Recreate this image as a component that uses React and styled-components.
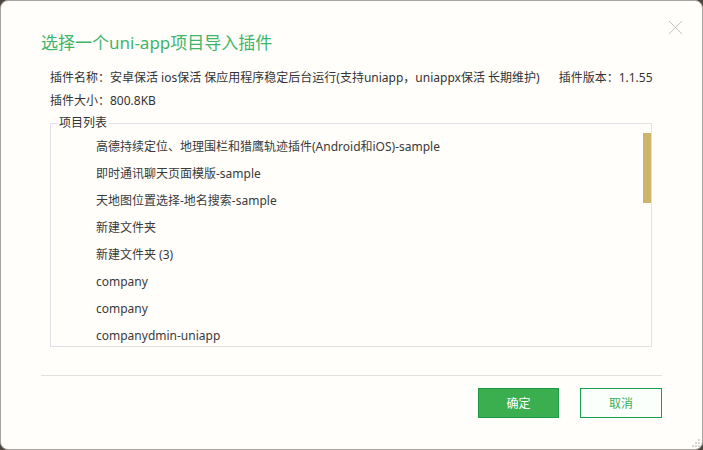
import React from 'react';
import styled, { createGlobalStyle } from 'styled-components';

const GlobalStyle = createGlobalStyle`
  html, body {
    margin: 0;
    padding: 0;
    background: #4d463e;
  }
  * {
    box-sizing: border-box;
  }
`;

const Window = styled.div`
  position: relative;
  width: 703px;
  height: 450px;
  display: flex;
  flex-direction: column;
  padding: 30px 40px 0 40px;
  background: #fffefb;
  border: 1px solid #a8a5a0;
  border-radius: 8px;
  font-family: "Noto Sans", "Noto Sans CJK SC", sans-serif;
  color: #333;
  overflow: hidden;
`;

const Title = styled.h1`
  margin: 0;
  font-size: 17px;
  line-height: 24px;
  font-weight: normal;
  color: #3fb56a;
`;

const CloseButton = styled.button`
  position: absolute;
  top: 18px;
  right: 19px;
  width: 16px;
  height: 16px;
  padding: 0;
  border: none;
  background: transparent;
  display: flex;
  align-items: center;
  justify-content: center;
  cursor: pointer;
`;

const Info = styled.div`
  margin: 11px 0 0 9px;
  font-size: 12px;
  line-height: 23px;
  color: #333;
  white-space: nowrap;
`;

const Spacer = styled.span`
  display: inline-block;
  width: ${props => props.w}px;
`;

const ProjectBox = styled.fieldset`
  margin: 3px 10px 0 9px;
  padding: 0;
  height: 232px;
  border: 1px solid #e2e0e6;
  min-width: 0;
`;

const Legend = styled.legend`
  margin-left: 6px;
  padding: 0 2px;
  font-size: 12px;
  line-height: 16px;
  color: #333;
`;

const ListArea = styled.div`
  display: flex;
  height: 214px;
  overflow: hidden;
`;

const List = styled.ul`
  flex: 1;
  list-style: none;
  margin: 0;
  padding: 2px 0 0 45px;
  overflow: hidden;
`;

const Item = styled.li`
  height: 27px;
  line-height: 27px;
  font-size: 12px;
  color: #3a3a3a;
  white-space: nowrap;
`;

const Track = styled.div`
  width: 8px;
  padding-top: 2px;
`;

const Thumb = styled.div`
  width: 8px;
  height: 70px;
  background: #d1b46b;
`;

const Divider = styled.div`
  margin-top: 28px;
  height: 1px;
  background: #e3e1de;
`;

const Footer = styled.div`
  display: flex;
  justify-content: flex-end;
  gap: 21px;
  margin-top: 12px;
`;

const Button = styled.button`
  width: ${props => props.primary ? 81 : 82}px;
  height: 30px;
  padding: 0;
  font-family: inherit;
  font-size: 12px;
  border: 1px solid ${props => props.primary ? '#1b9a48' : '#16a04c'};
  background: ${props => props.primary ? '#3bae50' : '#fbfffc'};
  color: ${props => props.primary ? '#ffffff' : '#3aae5a'};
  cursor: pointer;
`;

const Grip = styled.svg`
  position: absolute;
  right: 2px;
  bottom: 2px;
`;

const projects = [
  '高德持续定位、地理围栏和猎鹰轨迹插件(Android和iOS)-sample',
  '即时通讯聊天页面模版-sample',
  '天地图位置选择-地名搜索-sample',
  '新建文件夹',
  '新建文件夹 (3)',
  'company',
  'company',
  'companydmin-uniapp',
];

export default function App() {
  return (
    <>
      <GlobalStyle />
      <Window>
        <CloseButton aria-label="关闭">
          <svg width="15" height="15" viewBox="0 0 15 15">
            <path d="M1 1L14 14M14 1L1 14" stroke="#c4c4c4" strokeWidth="1" />
          </svg>
        </CloseButton>
        <Title>选择一个uni-app项目导入插件</Title>
        <Info>
          <div>
            插件名称：安卓保活 ios保活 保应用程序稳定后台运行(支持uniapp，uniappx保活 长期维护)
            <Spacer w={19} />
            插件版本：1.1.55
          </div>
          <div>插件大小：800.8KB</div>
        </Info>
        <ProjectBox>
          <Legend>项目列表</Legend>
          <ListArea>
            <List>
              {projects.map((name, i) => (
                <Item key={i}>{name}</Item>
              ))}
            </List>
            <Track>
              <Thumb />
            </Track>
          </ListArea>
        </ProjectBox>
        <Divider />
        <Footer>
          <Button primary>确定</Button>
          <Button>取消</Button>
        </Footer>
        <Grip width="8" height="8" viewBox="0 0 8 8">
          <rect x="6" y="0" width="2" height="2" fill="#d8d8d8" />
          <rect x="3" y="3" width="2" height="2" fill="#d8d8d8" />
          <rect x="6" y="3" width="2" height="2" fill="#d8d8d8" />
          <rect x="0" y="6" width="2" height="2" fill="#d8d8d8" />
          <rect x="3" y="6" width="2" height="2" fill="#d8d8d8" />
          <rect x="6" y="6" width="2" height="2" fill="#d8d8d8" />
        </Grip>
      </Window>
    </>
  );
}
